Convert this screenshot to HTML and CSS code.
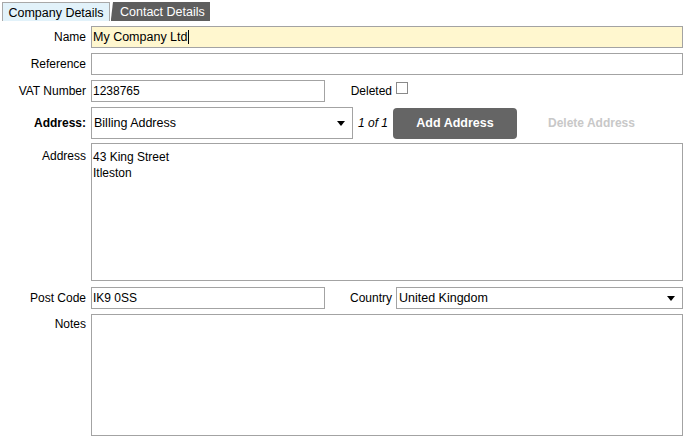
FILE: index.html
```html
<!DOCTYPE html>
<html>
<head>
<meta charset="utf-8">
<link rel="stylesheet" href="styles.css">
</head>
<body>
<div class="tabs">
  <div class="tab active">Company Details</div>
  <div class="tab dark">Contact Details</div>
</div>
<div class="form">
  <label class="lbl">Name</label>
  <div class="field name"><span>My Company Ltd</span><span class="caret"></span></div>

  <label class="lbl">Reference</label>
  <div class="field"></div>

  <label class="lbl">VAT Number</label>
  <div class="row">
    <div class="field short">1238765</div>
    <span class="sublbl">Deleted</span>
    <span class="check"></span>
  </div>

  <label class="lbl bold">Address:</label>
  <div class="row">
    <div class="select addr"><span>Billing Address</span><span class="tri"></span></div>
    <span class="count">1 of 1</span>
    <button class="btn">Add Address</button>
    <span class="btn-disabled">Delete Address</span>
  </div>

  <label class="lbl top">Address</label>
  <div class="area address">43 King Street<br>Itleston</div>

  <label class="lbl">Post Code</label>
  <div class="row postrow">
    <div class="field short">IK9 0SS</div>
    <span class="sublbl">Country</span>
    <div class="select country"><span>United Kingdom</span><span class="tri"></span></div>
  </div>

  <label class="lbl top notes-lbl">Notes</label>
  <div class="area notes"></div>
</div>
</body>
</html>
```
FILE: styles.css
```css
* { box-sizing: border-box; }
html, body { margin: 0; padding: 0; background: #fff; }
body {
  font-family: "Liberation Sans", Arial, sans-serif;
  font-size: 12px;
  color: #000;
  width: 686px;
  height: 446px;
  overflow: hidden;
}
.tabs {
  display: flex;
  height: 19px;
  margin-top: 2px;
  padding-left: 2px;
  align-items: stretch;
}
.tab {
  display: flex;
  align-items: center;
  white-space: nowrap;
  font-size: 12.5px;
  padding-top: 1px;
}
.tab.active {
  width: 108px;
  background: #e2f2fa;
  border: 1px solid #a8a8a8;
  border-bottom: none;
  justify-content: center;
}
.tab.dark {
  width: 99px;
  background: #5e5e5e;
  color: #fff;
  padding-left: 9px;
  clip-path: polygon(2px 0, 100% 0, 100% 100%, 0 100%, 0 17px);
  margin-left: 1px;
}
.form {
  display: grid;
  grid-template-columns: 86px 592px;
  column-gap: 5px;
  row-gap: 5px;
  margin-top: 5px;
}
.lbl {
  text-align: right;
  display: flex;
  align-items: center;
  justify-content: flex-end;
}
.lbl.bold { font-weight: bold; }
.lbl.top { align-items: flex-start; padding-top: 5px; }
.field {
  height: 22px;
  border: 1px solid #a3a3a3;
  background: #fff;
  display: flex;
  align-items: center;
  padding-left: 1px;
}
.field.name {
  background: #fff7cf;
  font-size: 12.5px;
}
.caret {
  display: inline-block;
  width: 1px;
  height: 14px;
  background: #000;
  margin-left: 1px;
}
.field.short { width: 234px; }
.row {
  display: flex;
  align-items: center;
}
.postrow { margin-top: 1px; }
.sublbl {
  width: 67px;
  text-align: right;
  margin-right: 4px;
}
.check {
  width: 12px;
  height: 12px;
  border: 1px solid #8a8a8a;
  background: #fff;
  margin-top: -6px;
}
.select {
  border: 1px solid #a3a3a3;
  display: flex;
  align-items: center;
  justify-content: space-between;
  padding: 0 7px 0 2px;
  background: #fff;
}
.select.addr { width: 262px; height: 32px; font-size: 12.5px; }
.select.country { width: 287px; height: 22px; font-size: 12.5px; }
.tri {
  width: 0;
  height: 0;
  border-left: 4px solid transparent;
  border-right: 4px solid transparent;
  border-top: 5px solid #000;
}
.count {
  font-style: italic;
  margin-left: 5px;
  width: 35px;
}
.btn {
  width: 124px;
  height: 31px;
  border: none;
  border-radius: 4px;
  background: #656565;
  color: #fff;
  font-family: inherit;
  font-size: 12.5px;
  font-weight: bold;
  padding: 0;
}
.btn-disabled {
  color: #c8c8c8;
  font-weight: bold;
  font-size: 12px;
  margin-left: 31px;
}
.area {
  border: 1px solid #a3a3a3;
  background: #fff;
  padding: 5px 1px;
  line-height: 16px;
}
.area.address { height: 138px; margin-top: -1px; }
.area.notes { height: 122px; }
.notes-lbl { padding-top: 3px !important; }
```
